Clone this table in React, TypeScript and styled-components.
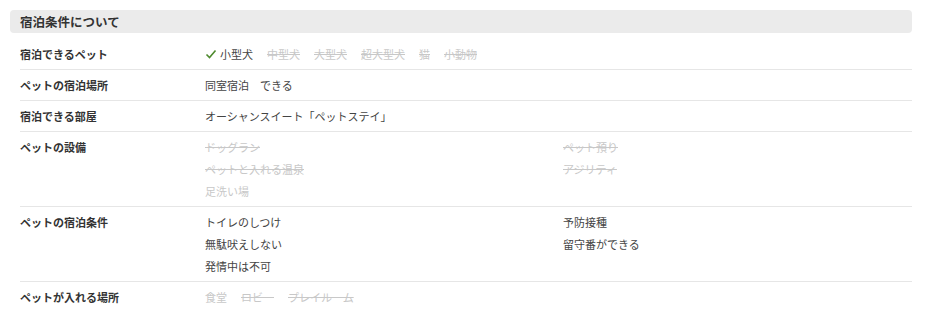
import React from "react";
import styled, { createGlobalStyle } from "styled-components";

const Global = createGlobalStyle`
  html, body { margin: 0; padding: 0; background: #fff; }
  body { font-family: "Noto Sans CJK JP", "Noto Sans", sans-serif; color: #333; }
`;

const Section = styled.section`
  padding: 10px 18px 0 10px;
`;

const Header = styled.h2`
  margin: 0 0 6px;
  height: 23px;
  display: flex;
  align-items: center;
  padding: 0 10px;
  background: #ebebeb;
  border-radius: 4px;
  font-size: 12.5px;
  font-weight: 700;
  color: #333;
`;

const Table = styled.div`
  margin-left: 10px;
`;

const Row = styled.div<{ $last?: boolean }>`
  display: grid;
  grid-template-columns: 185px 1fr;
  padding: 4px 0;
  border-bottom: ${(p) => (p.$last ? "none" : "1px solid #e6e6e6")};
`;

const Label = styled.div`
  font-size: 11px;
  font-weight: 700;
  line-height: 22px;
  color: #333;
`;

const Inline = styled.div`
  display: flex;
  gap: 14px;
  font-size: 11px;
  line-height: 22px;
`;

const Cols = styled.div`
  display: grid;
  grid-template-columns: 358px 1fr;
  grid-auto-flow: column;
  font-size: 11px;
  line-height: 22px;
`;

const Col = styled.div`
  display: flex;
  flex-direction: column;
`;

const Item = styled.span<{ $off?: boolean; $strike?: boolean }>`
  display: inline-flex;
  align-items: center;
  gap: 3px;
  color: ${(p) => (p.$off ? "#c8c8c8" : "#444")};
  text-decoration: ${(p) => (p.$strike ? "line-through" : "none")};
`;

const Check = () => (
  <svg width="12" height="12" viewBox="0 0 12 12">
    <path d="M1.5 6.5 L4.5 9.5 L10.5 2.5" fill="none" stroke="#4e8a2e" strokeWidth="1.6" />
  </svg>
);

type It = { t: string; off?: boolean; strike?: boolean };

const renderItems = (items: It[]) =>
  items.map((i) => (
    <Item key={i.t} $off={i.off} $strike={i.strike}>
      {i.t}
    </Item>
  ));

export default function App() {
  return (
    <>
      <Global />
      <Section>
        <Header>宿泊条件について</Header>
        <Table>
          <Row>
            <Label>宿泊できるペット</Label>
            <Inline>
              <Item>
                <Check />
                小型犬
              </Item>
              {renderItems([
                { t: "中型犬", off: true, strike: true },
                { t: "大型犬", off: true, strike: true },
                { t: "超大型犬", off: true, strike: true },
                { t: "猫", off: true, strike: true },
                { t: "小動物", off: true, strike: true },
              ])}
            </Inline>
          </Row>
          <Row>
            <Label>ペットの宿泊場所</Label>
            <Inline>
              <Item>同室宿泊　できる</Item>
            </Inline>
          </Row>
          <Row>
            <Label>宿泊できる部屋</Label>
            <Inline>
              <Item>オーシャンスイート「ペットステイ」</Item>
            </Inline>
          </Row>
          <Row>
            <Label>ペットの設備</Label>
            <Cols>
              <Col>
                {renderItems([
                  { t: "ドッグラン", off: true, strike: true },
                  { t: "ペットと入れる温泉", off: true, strike: true },
                  { t: "足洗い場", off: true },
                ])}
              </Col>
              <Col>
                {renderItems([
                  { t: "ペット預り", off: true, strike: true },
                  { t: "アジリティ", off: true, strike: true },
                ])}
              </Col>
            </Cols>
          </Row>
          <Row>
            <Label>ペットの宿泊条件</Label>
            <Cols>
              <Col>
                {renderItems([{ t: "トイレのしつけ" }, { t: "無駄吠えしない" }, { t: "発情中は不可" }])}
              </Col>
              <Col>{renderItems([{ t: "予防接種" }, { t: "留守番ができる" }])}</Col>
            </Cols>
          </Row>
          <Row $last>
            <Label>ペットが入れる場所</Label>
            <Inline>
              {renderItems([
                { t: "食堂", off: true },
                { t: "ロビー", off: true, strike: true },
                { t: "プレイルーム", off: true, strike: true },
              ])}
            </Inline>
          </Row>
        </Table>
      </Section>
    </>
  );
}
